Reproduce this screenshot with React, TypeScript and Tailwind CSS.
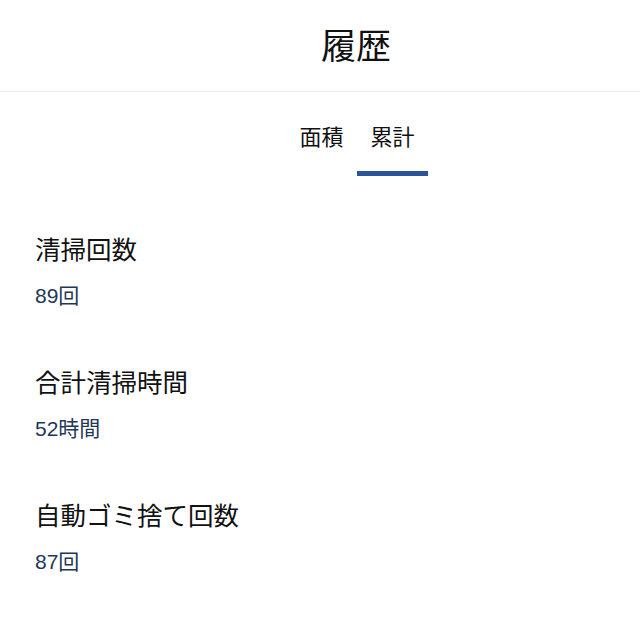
import React from 'react';

const STATS = [
  { id: 'count', label: '清掃回数', value: '89回' },
  { id: 'time', label: '合計清掃時間', value: '52時間' },
  { id: 'dust', label: '自動ゴミ捨て回数', value: '87回' },
];

export default function App() {
  return (
    <div
      className="w-[640px] h-[640px] bg-white text-[#111] overflow-hidden"
      style={{ fontFamily: '"Liberation Sans", "Noto Sans CJK JP", sans-serif' }}
    >
      <div className="border-b border-[#ececec] pt-[29px] pb-[26px] pl-[72px] flex justify-center">
        <h1 className="text-[35px] leading-[36px] font-normal">履歴</h1>
      </div>

      <div className="flex pl-[286px] pt-[31px]">
        <div className="w-[71px] flex flex-col items-center">
          <span className="text-[22px] leading-[30px]">面積</span>
          <div className="h-[5px] w-full mt-[18px]" />
        </div>
        <div className="w-[71px] flex flex-col items-center">
          <span className="text-[22px] leading-[30px]">累計</span>
          <div className="h-[5px] w-full mt-[18px] bg-[#2b549a]" />
        </div>
      </div>

      <div className="flex flex-col pl-[35px] pt-[56px] gap-[54px]">
        {STATS.map((s) => (
          <div key={s.id} className="flex flex-col gap-[13px]">
            <h2 className="text-[25.5px] leading-[36px] font-normal">{s.label}</h2>
            <span className="text-[21px] leading-[30px] text-[#1f3759]">{s.value}</span>
          </div>
        ))}
      </div>
    </div>
  );
}
